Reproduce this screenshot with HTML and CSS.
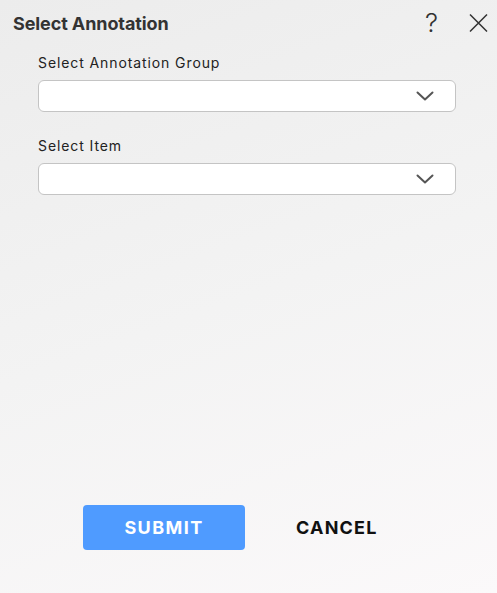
FILE: index.html
```html
<!DOCTYPE html>
<html>
<head>
<meta charset="utf-8">
<link rel="stylesheet" href="styles.css">
</head>
<body>
<div class="dialog">
  <div class="header">
    <h1 class="title">Select Annotation</h1>
    <div class="actions">
      <span class="help">?</span>
      <svg class="close" width="19" height="18" viewBox="0 0 19 18"><path d="M1 0.5 L18 17.5 M18 0.5 L1 17.5" stroke="#333" stroke-width="1.5" fill="none"/></svg>
    </div>
  </div>
  <div class="form">
    <div class="field">
      <label class="label">Select Annotation Group</label>
      <div class="select">
        <svg class="chev" width="18" height="10" viewBox="0 0 18 10"><path d="M1.5 1.5 L9 8.5 L16.5 1.5" stroke="#555" stroke-width="2" fill="none" stroke-linecap="round" stroke-linejoin="round"/></svg>
      </div>
    </div>
    <div class="field">
      <label class="label">Select Item</label>
      <div class="select">
        <svg class="chev" width="18" height="10" viewBox="0 0 18 10"><path d="M1.5 1.5 L9 8.5 L16.5 1.5" stroke="#555" stroke-width="2" fill="none" stroke-linecap="round" stroke-linejoin="round"/></svg>
      </div>
    </div>
  </div>
  <div class="footer">
    <button class="btn submit">SUBMIT</button>
    <button class="btn cancel">CANCEL</button>
  </div>
</div>
</body>
</html>
```
FILE: styles.css
```css
* { box-sizing: border-box; }
html, body { margin: 0; padding: 0; }
body {
  width: 497px;
  height: 593px;
  font-family: Inter, "Liberation Sans", sans-serif;
  background: linear-gradient(160deg, #ececec 0%, #f3f3f3 50%, #fbf9fa 100%);
  overflow: hidden;
}
.dialog {
  height: 593px;
  display: flex;
  flex-direction: column;
}
.header {
  display: flex;
  align-items: center;
  justify-content: space-between;
  padding: 10px 9px 0 13px;
  height: 36px;
}
.title {
  margin: 0;
  font-size: 18px;
  font-weight: 700;
  color: #333;
  letter-spacing: -0.1px;
}
.actions {
  display: flex;
  align-items: center;
  gap: 31px;
}
.help {
  font-family: Inter, "DejaVu Sans", sans-serif;
  font-weight: 300;
  font-size: 26px;
  color: #333;
  line-height: 1;
}
.close { display: block; }
.form {
  padding: 18px 41px 0 38px;
  display: flex;
  flex-direction: column;
  gap: 25px;
}
.field {
  display: flex;
  flex-direction: column;
  gap: 9px;
}
.label {
  font-size: 14px;
  color: #222;
  letter-spacing: 0.9px;
  line-height: 17px;
}
.select {
  height: 32px;
  background: #fff;
  border: 1px solid #c4c4c4;
  border-radius: 6px;
  display: flex;
  align-items: center;
  justify-content: flex-end;
  padding-right: 21px;
}
.chev { display: block; }
.footer {
  margin-top: auto;
  display: flex;
  align-items: center;
  padding: 0 0 43px 83px;
  gap: 51px;
}
.btn {
  font-family: Inter, "Liberation Sans", sans-serif;
  font-weight: 700;
  font-size: 18px;
  letter-spacing: 1.4px;
  border: none;
  cursor: pointer;
}
.submit {
  width: 162px;
  height: 45px;
  background: #4f9bff;
  color: #fff;
  border-radius: 4px;
}
.cancel {
  background: none;
  color: #111;
  padding: 0;
  letter-spacing: 1.2px;
}
```
